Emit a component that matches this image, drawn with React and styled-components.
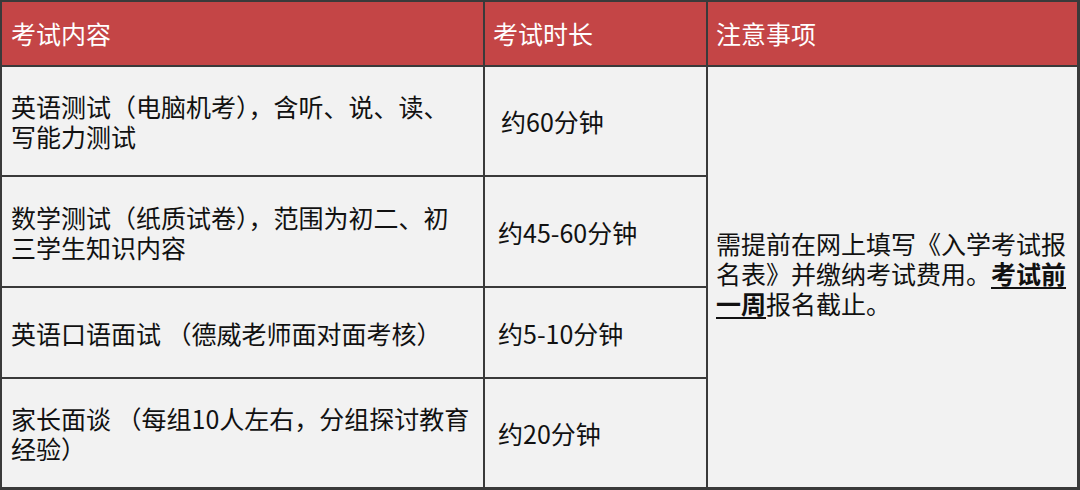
import React from 'react'
import styled, { createGlobalStyle } from 'styled-components'

const GlobalStyle = createGlobalStyle`
  html, body {
    margin: 0;
    padding: 0;
    background: #ffffff;
  }
  body {
    font-family: "Noto Sans CJK SC", "Noto Sans", sans-serif;
  }
`

const Table = styled.div`
  width: 1080px;
  height: 490px;
  box-sizing: border-box;
  display: grid;
  grid-template-columns: 481px 221px 1fr;
  grid-template-rows: 63px 108px 109px 89px 1fr;
  gap: 2px;
  padding: 2px 3px 3px 2px;
  background: #3a3a3a;
`

const HeadCell = styled.div`
  background: #c44546;
  color: #ffffff;
  font-size: 25px;
  line-height: 30px;
  display: flex;
  align-items: center;
  padding: 0 0 2px ${p => p.$indent || 9}px;
`

const Cell = styled.div`
  background: #f2f2f2;
  color: #111111;
  font-size: 25px;
  line-height: 30px;
  display: flex;
  align-items: center;
  white-space: nowrap;
  padding: 0 0 0 ${p => p.$indent || 9}px;
  ${p => p.$span && `grid-column: 3; grid-row: 2 / 6;`}
`

const Lines = styled.p`
  margin: 0;
  padding-bottom: ${p => p.$lift || 0}px;
  strong {
    font-weight: 700;
    text-decoration: underline;
    text-underline-offset: 3px;
    text-decoration-thickness: 2px;
  }
`

const rows = [
  { content: ['英语测试（电脑机考），含听、说、读、', '写能力测试'], time: '约60分钟', shift: 16 },
  { content: ['数学测试（纸质试卷），范围为初二、初', '三学生知识内容'], time: '约45-60分钟', shift: 13 },
  { content: ['英语口语面试 （德威老师面对面考核）'], time: '约5-10分钟', shift: 13 },
  { content: ['家长面谈 （每组10人左右，分组探讨教育', '经验）'], time: '约20分钟', shift: 13 },
]

export default function App() {
  return (
    <>
      <GlobalStyle />
      <Table>
        <HeadCell $indent={9}>考试内容</HeadCell>
        <HeadCell $indent={8}>考试时长</HeadCell>
        <HeadCell $indent={8}>注意事项</HeadCell>
        {rows.map((r, i) => (
          <React.Fragment key={i}>
            <Cell $indent={9}>
              <Lines>
                {r.content.map((line, j) => (
                  <React.Fragment key={j}>
                    {j > 0 && <br />}
                    {line}
                  </React.Fragment>
                ))}
              </Lines>
            </Cell>
            <Cell $indent={r.shift}>{r.time}</Cell>
            {i === 0 && (
              <Cell $span $indent={8}>
                <Lines $lift={8}>
                  需提前在网上填写《入学考试报<br />
                  名表》并缴纳考试费用。<strong>考试前<br />一周</strong>报名截止。
                </Lines>
              </Cell>
            )}
          </React.Fragment>
        ))}
      </Table>
    </>
  )
}
